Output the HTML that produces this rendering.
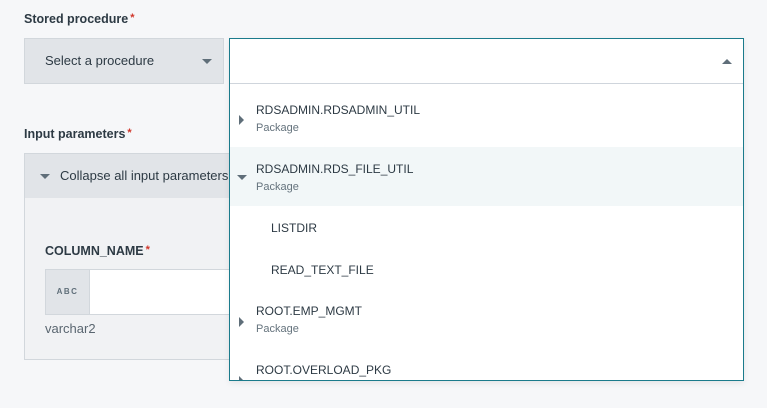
<!DOCTYPE html>
<html><head><meta charset="utf-8"><style>
*{box-sizing:border-box;margin:0;padding:0}
body{width:767px;height:408px;background:#f6f7f9;font-family:"Liberation Sans",sans-serif;color:#2d3a44;position:relative;overflow:hidden}
.a{position:absolute}
.lbl{font-weight:bold;font-size:12.5px;color:#2d3a44}
.req{color:#d0362a;font-size:11px;vertical-align:top;margin-left:2px}
.tri-d{width:0;height:0;border-left:5px solid transparent;border-right:5px solid transparent;border-top:5px solid #5f6e79}
.tri-r{width:0;height:0;border-top:5px solid transparent;border-bottom:5px solid transparent;border-left:5px solid #5f6e79}
.it{font-size:12px;color:#2d3a44}
.pk{font-size:11px;color:#65737d}
</style></head><body>
<div class="a lbl" style="left:24px;top:12px">Stored procedure<span class="req">*</span></div>
<div class="a" style="left:24px;top:38px;width:200px;height:46px;background:#e1e4e8;border:1px solid #d2d7dc"></div>
<div class="a" style="left:45px;top:53px;font-size:13px;color:#2d3a44">Select a procedure</div>
<div class="a tri-d" style="left:202px;top:59px"></div>

<div class="a lbl" style="left:24px;top:127px">Input parameters<span class="req">*</span></div>
<div class="a" style="left:24px;top:153px;width:230px;height:207px;background:#f1f2f4;border:1px solid #d2d7dc"></div>
<div class="a" style="left:25px;top:154px;width:229px;height:44px;background:#e1e4e8"></div>
<div class="a tri-d" style="left:40px;top:174px"></div>
<div class="a" style="left:60px;top:168px;font-size:13px;color:#2d3a44;white-space:nowrap">Collapse all input parameters</div>
<div class="a lbl" style="left:45px;top:244px">COLUMN_NAME<span class="req">*</span></div>
<div class="a" style="left:45px;top:269px;width:200px;height:46px;background:#fff;border:1px solid #d2d7dc"></div>
<div class="a" style="left:46px;top:270px;width:44px;height:44px;background:#e1e4e8;border-right:1px solid #d2d7dc;font-size:8px;font-weight:bold;letter-spacing:1.5px;color:#5f6e79;text-align:center;line-height:44px">ABC</div>
<div class="a" style="left:45px;top:321px;font-size:13px;color:#5a6670">varchar2</div>

<div class="a" style="left:229px;top:38px;width:515px;height:343px;background:#fff;border:1px solid #1b7b8c;box-shadow:0 2px 6px rgba(0,0,0,.08);overflow:hidden">
 <div class="a tri-d" style="left:492px;top:20px;transform:rotate(180deg)"></div>
 <div class="a" style="left:0;top:44px;width:100%;height:1px;background:#cfd5dc"></div>
 <div class="a" style="left:0;top:108px;width:100%;height:59px;background:#f2f7f8"></div>
 <div class="a tri-r" style="left:9px;top:76px"></div>
 <div class="a it" style="left:26px;top:64px">RDSADMIN.RDSADMIN_UTIL</div>
 <div class="a pk" style="left:26px;top:83px">Package</div>
 <div class="a tri-d" style="left:7px;top:136px"></div>
 <div class="a it" style="left:26px;top:123px">RDSADMIN.RDS_FILE_UTIL</div>
 <div class="a pk" style="left:26px;top:142px">Package</div>
 <div class="a it" style="left:41px;top:182px">LISTDIR</div>
 <div class="a it" style="left:41px;top:224px">READ_TEXT_FILE</div>
 <div class="a tri-r" style="left:9px;top:278px"></div>
 <div class="a it" style="left:26px;top:265px">ROOT.EMP_MGMT</div>
 <div class="a pk" style="left:26px;top:284px">Package</div>
 <div class="a tri-r" style="left:9px;top:337px"></div>
 <div class="a it" style="left:26px;top:324px">ROOT.OVERLOAD_PKG</div>
</div>
</body></html>
